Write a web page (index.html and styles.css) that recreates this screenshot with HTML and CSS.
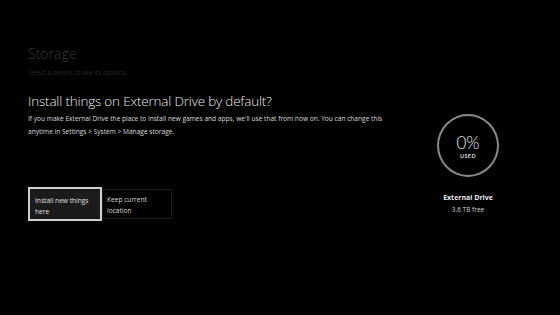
FILE: index.html
```html
<!DOCTYPE html>
<html lang="en">
<head>
<meta charset="utf-8">
<title>Storage</title>
<link rel="stylesheet" href="styles.css">
</head>
<body>
<div class="page">
  <div class="left">
    <div class="crumb">
      <h1 class="crumb-title">Storage</h1>
      <p class="crumb-sub">Select a device to see its options.</p>
    </div>
    <h2 class="question">Install things on External Drive by default?</h2>
    <p class="desc">If you make External Drive the place to install new games and apps, we'll use that from now on. You can change this anytime in Settings &gt; System &gt; Manage storage.</p>
    <div class="actions">
      <div class="btn btn-focus">Install new things here</div>
      <div class="btn">Keep current location</div>
    </div>
  </div>
  <div class="right">
    <div class="meter">
      <div class="meter-value">0%</div>
      <div class="meter-label">USED</div>
    </div>
    <div class="drive-name">External Drive</div>
    <div class="drive-free">3.6 TB free</div>
  </div>
</div>
</body>
</html>
```
FILE: styles.css
```css
html, body {
  margin: 0;
  padding: 0;
  background: #000;
  width: 560px;
  height: 315px;
  overflow: hidden;
}
body {
  font-family: "Open Sans", "Noto Sans", sans-serif;
  color: #e8e8e8;
}
.page {
  display: flex;
  padding: 44px 0 0 28px;
}
.left {
  width: 400px;
  display: flex;
  flex-direction: column;
}
.crumb-title {
  margin: 0;
  font-size: 14px;
  font-weight: 300;
  line-height: 20px;
  color: #3a3a3a;
}
.crumb-sub {
  margin: 4px 0 0;
  font-size: 6.5px;
  line-height: 9px;
  color: #2a2a2a;
}
.question {
  margin: 14px 0 0;
  font-size: 13.4px;
  font-weight: 300;
  letter-spacing: -0.15px;
  line-height: 20px;
  color: #ececec;
}
.desc {
  margin: 1px 0 0;
  width: 360px;
  font-size: 6.6px;
  line-height: 13px;
  color: #dcdcdc;
}
.actions {
  display: flex;
  align-items: center;
  margin-top: 49px;
}
.btn {
  box-sizing: border-box;
  width: 70px;
  height: 30px;
  padding: 4px 4px;
  font-size: 6.6px;
  line-height: 11px;
  color: #d8d8d8;
  border: 1px solid #1c1c1c;
}
.btn-focus {
  width: 74px;
  height: 34px;
  padding: 6px 5px;
  background: #1b1b1b;
  border: 2px solid #d0d0d0;
  color: #e0e0e0;
}
.right {
  width: 80px;
  margin-top: 70px;
  display: flex;
  flex-direction: column;
  align-items: center;
}
.meter {
  box-sizing: border-box;
  width: 62px;
  height: 63px;
  padding-top: 4px;
  border: 2px solid #8a8a8a;
  border-radius: 50%;
  display: flex;
  flex-direction: column;
  align-items: center;
  justify-content: center;
}
.meter-value {
  font-family: Lato, "Open Sans", sans-serif;
  font-size: 17px;
  font-weight: 300;
  line-height: 16px;
  color: #e8e8e8;
}
.meter-label {
  font-family: Lato, "Open Sans", sans-serif;
  font-size: 5.5px;
  font-weight: 700;
  line-height: 7px;
  margin-top: 2.2px;
  letter-spacing: 0.4px;
  color: #d8d8d8;
}
.drive-name {
  margin-top: 15px;
  font-size: 7px;
  font-weight: 700;
  line-height: 12px;
  color: #e8e8e8;
}
.drive-free {
  font-size: 6.5px;
  line-height: 12px;
  color: #d0d0d0;
}
```
